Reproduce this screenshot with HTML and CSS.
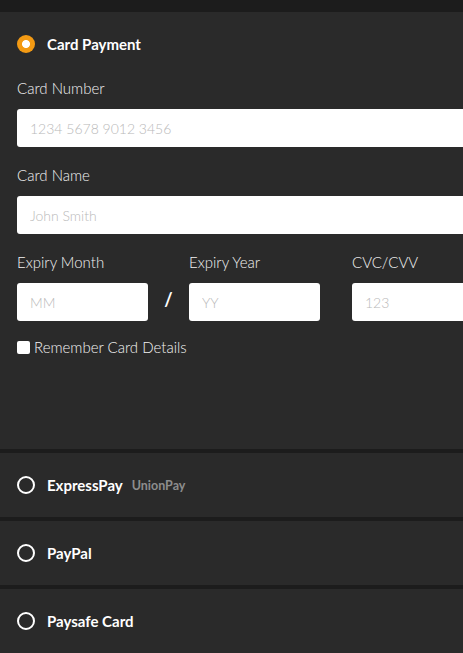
FILE: index.html
```html
<!DOCTYPE html>
<html lang="en">
<head>
<meta charset="utf-8">
<title>Payment</title>
<link rel="stylesheet" href="styles.css">
</head>
<body>
<div class="page">
  <section class="panel open">
    <div class="panel-head">
      <span class="radio checked"></span>
      <span class="method">Card Payment</span>
    </div>
    <div class="panel-body">
      <div class="field">
        <label class="label">Card Number</label>
        <input class="input" type="text" placeholder="1234 5678 9012 3456">
      </div>
      <div class="field">
        <label class="label">Card Name</label>
        <input class="input" type="text" placeholder="John Smith">
      </div>
      <div class="expiry-row">
        <div class="field col">
          <label class="label">Expiry Month</label>
          <input class="input" type="text" placeholder="MM">
        </div>
        <div class="slash">/</div>
        <div class="field col">
          <label class="label">Expiry Year</label>
          <input class="input" type="text" placeholder="YY">
        </div>
        <div class="field col cvc">
          <label class="label">CVC/CVV</label>
          <input class="input" type="text" placeholder="123">
        </div>
      </div>
      <label class="remember"><input class="check" type="checkbox"><span>Remember Card Details</span></label>
    </div>
  </section>
  <section class="panel">
    <div class="panel-head">
      <span class="radio"></span>
      <span class="method">ExpressPay</span>
      <span class="sub">UnionPay</span>
    </div>
  </section>
  <section class="panel">
    <div class="panel-head">
      <span class="radio"></span>
      <span class="method">PayPal</span>
    </div>
  </section>
  <section class="panel">
    <div class="panel-head">
      <span class="radio"></span>
      <span class="method">Paysafe Card</span>
    </div>
  </section>
</div>
</body>
</html>
```

FILE: styles.css
```css
html, body {
  margin: 0;
  padding: 0;
  overflow: hidden;
  background: #1c1c1c;
}
body {
  font-family: Lato, "Open Sans", sans-serif;
  color: #e6e6e6;
}
.page {
  padding-top: 12px;
  width: 540px;
  display: flex;
  flex-direction: column;
  gap: 4px;
}
.panel {
  background: #2a2a2a;
  padding: 0 17px;
}
.panel.open {
  height: 437px;
  box-sizing: border-box;
}
.panel-head {
  height: 64px;
  display: flex;
  align-items: center;
}
.radio {
  width: 18px;
  height: 18px;
  box-sizing: border-box;
  border-radius: 50%;
  border: 2px solid #ffffff;
  margin-right: 12px;
  flex: none;
}
.radio.checked {
  border: none;
  background: radial-gradient(circle, #ffffff 0 3.6px, #f39a13 4.4px);
}
.method {
  font-weight: 700;
  font-size: 15px;
  color: #ffffff;
}
.sub {
  font-weight: 700;
  font-size: 12.5px;
  color: #8d8d8d;
  margin-left: 9px;
  margin-top: 1px;
}
.panel-body {
  padding-top: 2px;
}
.field {
  display: flex;
  flex-direction: column;
  margin-bottom: 18px;
}
.label {
  font-size: 15px;
  font-weight: 300;
  line-height: 20px;
  color: #f2f2f2;
  margin-bottom: 11px;
}
.input {
  height: 38px;
  box-sizing: border-box;
  border: none;
  border-radius: 3px;
  background: #ffffff;
  padding: 0 13px;
  font-family: Lato, sans-serif;
  font-weight: 300;
  font-size: 14px;
  color: #333;
  outline: none;
}
.input::placeholder {
  color: #b9b9b9;
}
.expiry-row {
  display: flex;
  align-items: flex-end;
}
.col {
  width: 131px;
  margin-bottom: 0;
}
.cvc {
  margin-left: 32px;
}
.slash {
  width: 41px;
  height: 38px;
  display: flex;
  align-items: center;
  justify-content: center;
  font-weight: 700;
  font-size: 18px;
  color: #ffffff;
  padding-bottom: 6px;
  box-sizing: border-box;
}
.remember {
  display: flex;
  align-items: center;
  margin-top: 17px;
  font-size: 15px;
  font-weight: 300;
  color: #f2f2f2;
}
.check {
  appearance: none;
  width: 13px;
  height: 13px;
  margin: 0 4px 0 0;
  background: #ffffff;
  border-radius: 2px;
}
```
